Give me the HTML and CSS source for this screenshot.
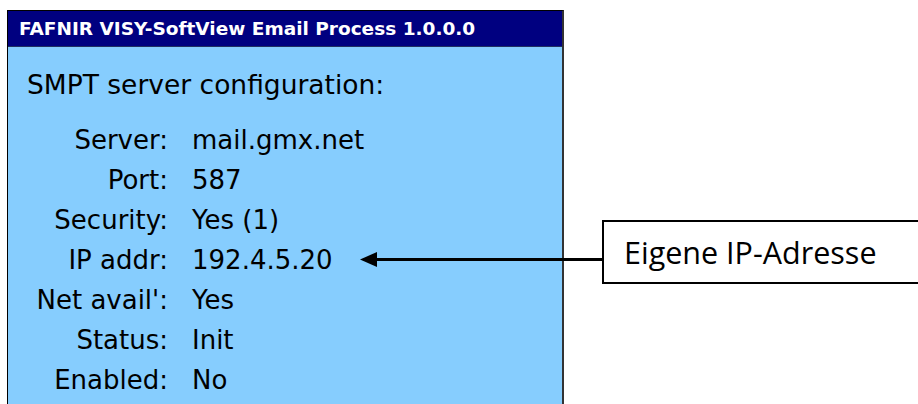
FILE: index.html
```html
<!DOCTYPE html>
<html>
<head>
<meta charset="utf-8">
<link rel="stylesheet" href="styles.css">
</head>
<body>
<div class="page">
  <div class="panel">
    <div class="titlebar">FAFNIR VISY-SoftView Email Process 1.0.0.0</div>
    <div class="content">
      <div class="heading">SMPT server configuration:</div>
      <div class="rows">
        <div class="label">Server:</div><div class="value">mail.gmx.net</div>
        <div class="label">Port:</div><div class="value">587</div>
        <div class="label">Security:</div><div class="value">Yes (1)</div>
        <div class="label">IP addr:</div><div class="value">192.4.5.20</div>
        <div class="label">Net avail':</div><div class="value">Yes</div>
        <div class="label">Status:</div><div class="value">Init</div>
        <div class="label">Enabled:</div><div class="value">No</div>
      </div>
    </div>
  </div>
  <svg class="arrow" width="246" height="20" viewBox="0 0 246 20">
    <line x1="16" y1="9.5" x2="246" y2="9.5" stroke="#000" stroke-width="3"/>
    <polygon points="2,9.5 19,2 19,17" fill="#000"/>
  </svg>
  <div class="callout">Eigene IP-Adresse</div>
</div>
</body>
</html>
```
FILE: styles.css
```css
html, body {
  margin: 0;
  padding: 0;
  background: #fff;
  overflow: hidden;
}
.page {
  position: relative;
  width: 918px;
  height: 404px;
  padding: 10px 0 0 7px;
  box-sizing: border-box;
}
.panel {
  width: 557px;
  height: 394px;
  overflow: hidden;
  box-sizing: border-box;
  background: #86cdfe;
  border-left: 1px solid #000;
  border-top: 1px solid #000;
  border-right: 2px solid #333;
  font-family: "DejaVu Sans", sans-serif;
  color: #000;
}
.titlebar {
  height: 35px;
  background: #000080;
  color: #fff;
  font-weight: bold;
  font-size: 18.5px;
  line-height: 35px;
  padding-left: 11px;
  border-bottom: 1px solid #203060;
  white-space: nowrap;
}
.content {
  padding-top: 18px;
}
.heading {
  font-size: 26.5px;
  line-height: 40px;
  padding-left: 19px;
  margin-bottom: 15px;
  white-space: nowrap;
}
.rows {
  display: grid;
  grid-template-columns: 160px auto;
  column-gap: 24px;
  grid-auto-rows: 40px;
  font-size: 26px;
  line-height: 40px;
  white-space: nowrap;
}
.label {
  text-align: right;
}
.arrow {
  position: absolute;
  left: 358px;
  top: 250px;
  display: block;
}
.callout {
  position: absolute;
  left: 602px;
  top: 220px;
  width: 340px;
  height: 64px;
  box-sizing: border-box;
  border: 2px solid #000;
  background: #fff;
  font-family: "Open Sans", sans-serif;
  font-size: 30.5px;
  line-height: 60px;
  padding-left: 20px;
  color: #000;
}
```
